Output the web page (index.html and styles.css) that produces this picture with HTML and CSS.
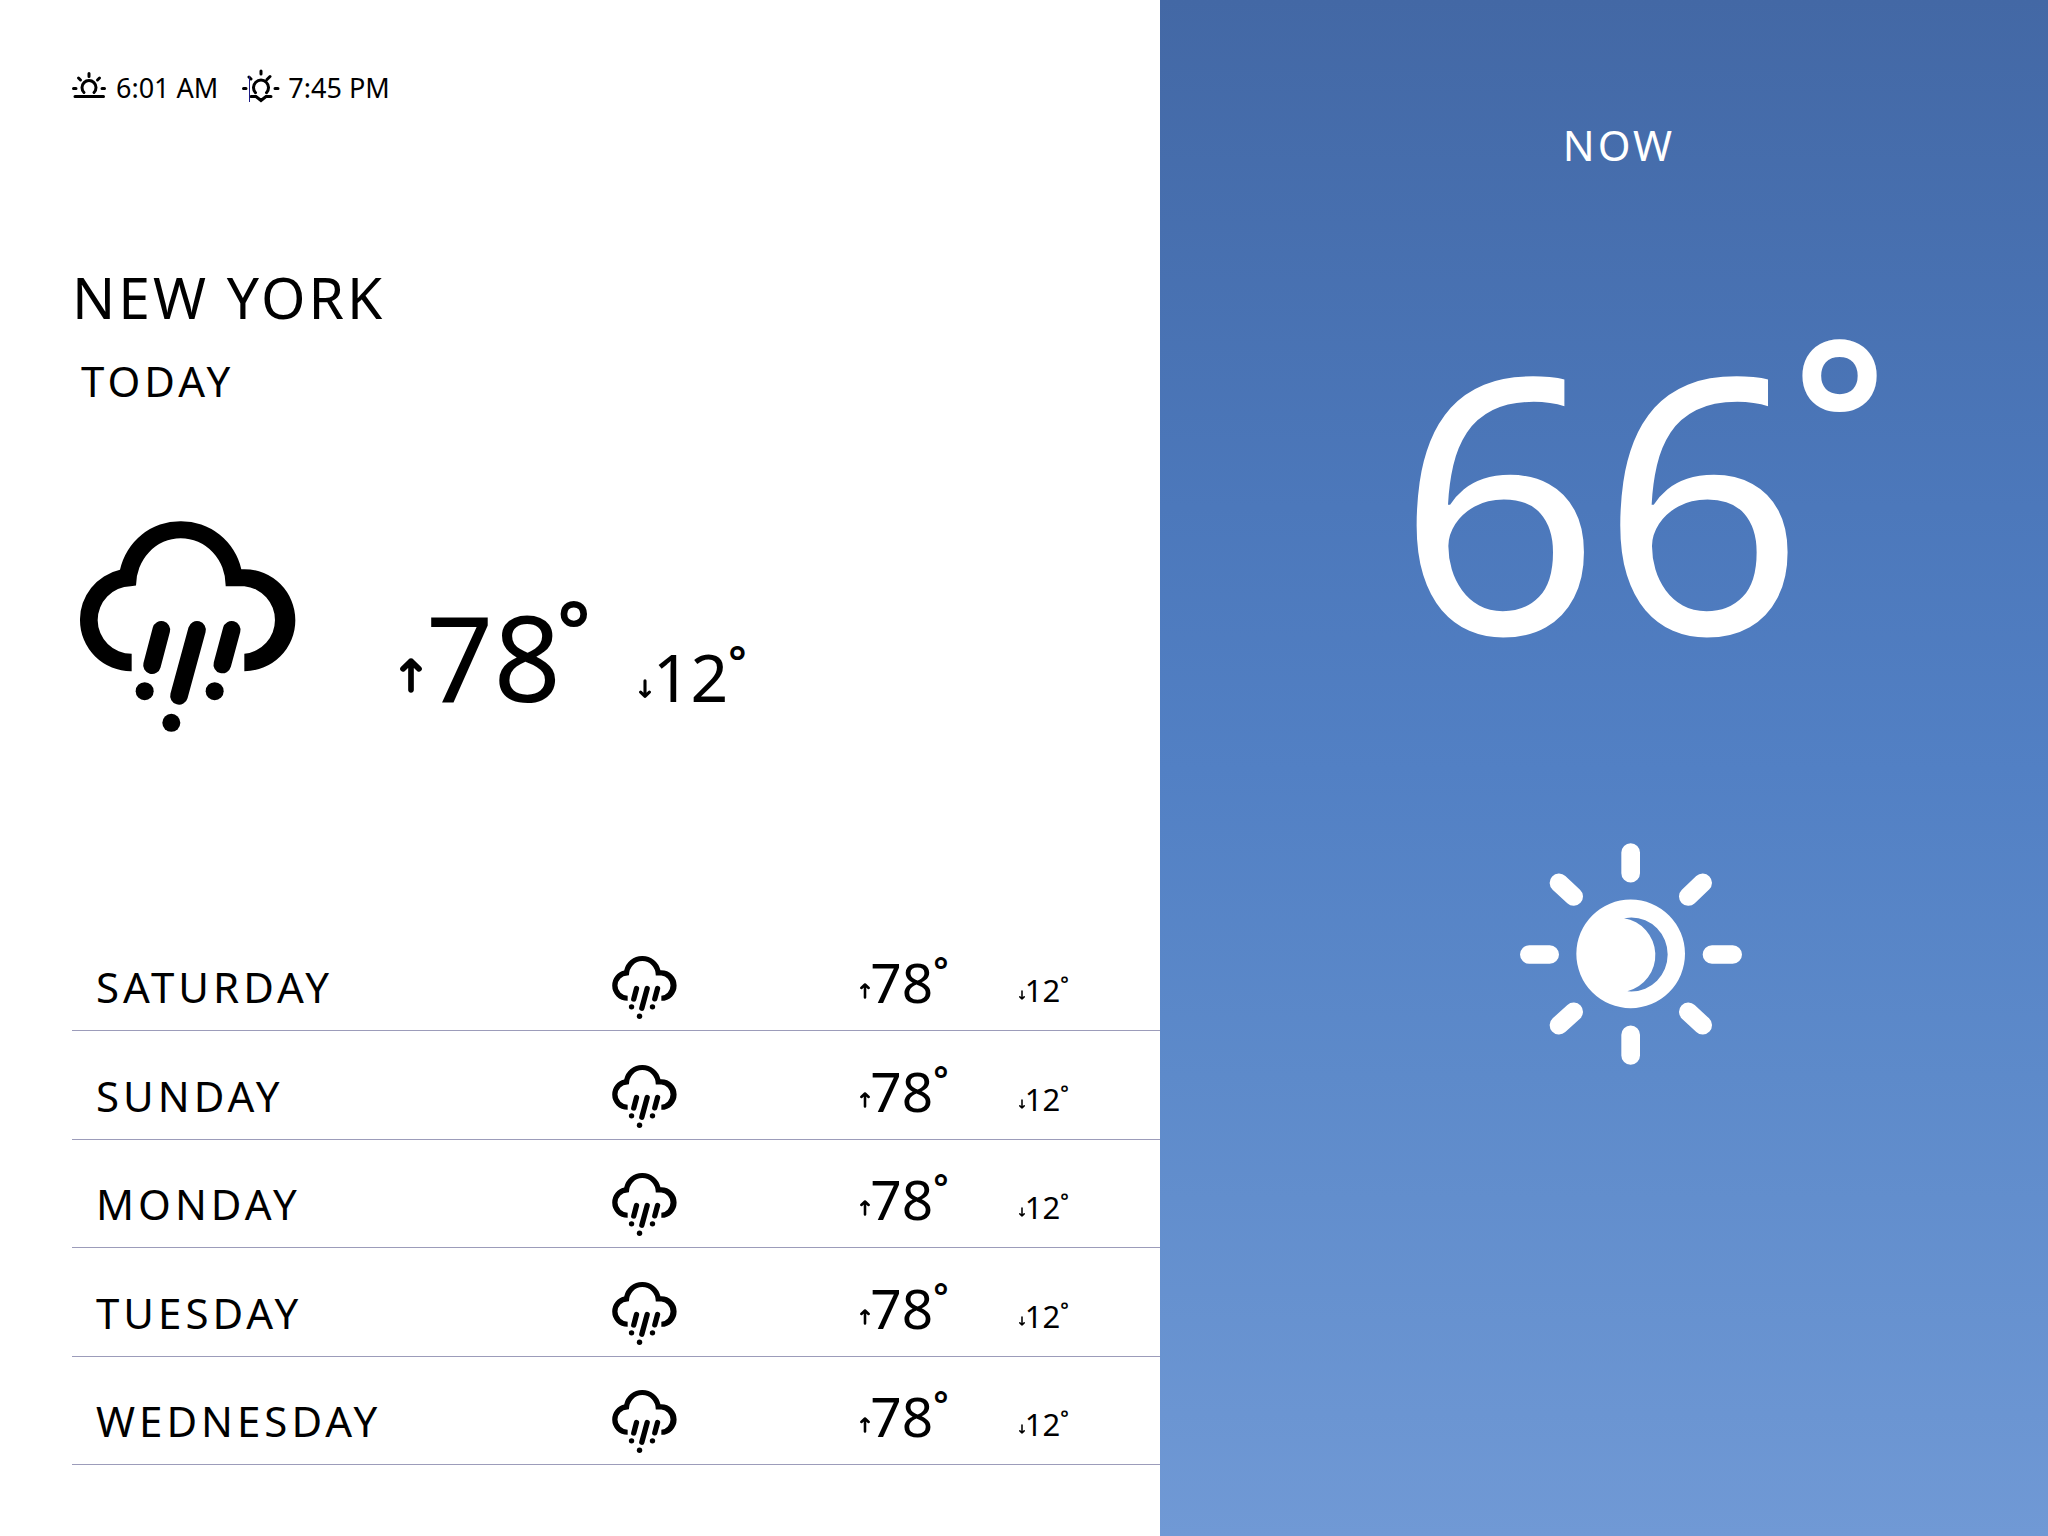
FILE: index.html
```html
<!DOCTYPE html>
<html lang="en">
<head>
<meta charset="utf-8">
<meta name="viewport" content="width=device-width, initial-scale=1">
<title>New York weather</title>
<link rel="stylesheet" href="styles.css">
</head>
<body>
<svg class="sprite" aria-hidden="true">
  <symbol id="rain" viewBox="60 63 648 632">
    <path d="M215 513A153 153 0 0 1 60 360A153 153 0 0 1 180 209A185 185 0 0 1 362 63A185 185 0 0 1 544 207H553A153 153 0 0 1 553 513V461A102 102 0 0 0 553 258H497A135 142 0 0 0 362 114A135 142 0 0 0 228 256L212 258A102 102 0 0 0 113 360A102 102 0 0 0 215 461Z"/>
    <path d="M304 389L276 495M411 389L357 587M515 389L487 493" stroke="currentColor" stroke-width="53" stroke-linecap="round"/>
    <circle cx="254" cy="573" r="27"/><circle cx="464" cy="573" r="27"/><circle cx="334" cy="668" r="27"/>
  </symbol>
  <symbol id="up" viewBox="0 0 66 104">
    <path d="M33 9V95M9 32L33 9L57 32" fill="none" stroke="currentColor" stroke-width="17" stroke-linecap="round" stroke-linejoin="round"/>
  </symbol>
  <symbol id="down" viewBox="0 0 66 104">
    <path d="M33 9V95M9 72L33 95L57 72" fill="none" stroke="currentColor" stroke-width="17" stroke-linecap="round" stroke-linejoin="round"/>
  </symbol>
</svg>
<main class="app">
  <section class="forecast">
    <div class="sun-times">
      <span class="sun-time">
        <svg class="sun-icon" viewBox="0 0 36 36" role="img" aria-label="Sunrise"><path d="M3 26.5H31.5M12 22.5A7 7 0 1 1 22 22.5M1.5 18.5H4M30 18.5H32.5M17 3.5V6.5M6.500 8L8.500 10M27.500 8L25.500 10"/></svg>
        <span>6:01 AM</span>
      </span>
      <span class="sun-time">
        <svg class="sun-icon sunset" viewBox="0 0 38 36" role="img" aria-label="Sunset"><path d="M9 26.500H14L19 30.500L24 26.500H29M13.500 22.700A7.500 7.500 0 1 1 24.500 22.700M1.500 18.500H4M33 18.500H36M19 1V4M7 7L9 9M28 6.500L25 9.500"/><path class="cursor" d="M7.500 6V32"/></svg>
        <span>7:45 PM</span>
      </span>
    </div>
    <h1 class="city">NEW YORK</h1>
    <h2 class="day-label">TODAY</h2>
    <div class="today">
      <svg class="today-icon" role="img" aria-label="Rain"><use href="#rain"/></svg>
      <div class="today-temps">
        <span class="temp temp-xl"><svg class="arrow" aria-label="High"><use href="#up"/></svg>78<span class="deg">°</span></span>
        <span class="temp temp-lg"><svg class="arrow" aria-label="Low"><use href="#down"/></svg>12<span class="deg">°</span></span>
      </div>
    </div>
    <table class="week">
      <colgroup><col class="c-day"><col class="c-icon"><col class="c-high"><col class="c-low"></colgroup>
      <tbody>
        <tr><th scope="row">SATURDAY</th><td class="icon"><svg class="row-icon" role="img" aria-label="Rain"><use href="#rain"/></svg></td><td class="high"><span class="temp temp-md"><svg class="arrow" aria-label="High"><use href="#up"/></svg>78<span class="deg">°</span></span></td><td class="low"><span class="temp temp-sm"><svg class="arrow" aria-label="Low"><use href="#down"/></svg>12<span class="deg">°</span></span></td></tr>
        <tr><th scope="row">SUNDAY</th><td class="icon"><svg class="row-icon" role="img" aria-label="Rain"><use href="#rain"/></svg></td><td class="high"><span class="temp temp-md"><svg class="arrow" aria-label="High"><use href="#up"/></svg>78<span class="deg">°</span></span></td><td class="low"><span class="temp temp-sm"><svg class="arrow" aria-label="Low"><use href="#down"/></svg>12<span class="deg">°</span></span></td></tr>
        <tr><th scope="row">MONDAY</th><td class="icon"><svg class="row-icon" role="img" aria-label="Rain"><use href="#rain"/></svg></td><td class="high"><span class="temp temp-md"><svg class="arrow" aria-label="High"><use href="#up"/></svg>78<span class="deg">°</span></span></td><td class="low"><span class="temp temp-sm"><svg class="arrow" aria-label="Low"><use href="#down"/></svg>12<span class="deg">°</span></span></td></tr>
        <tr><th scope="row">TUESDAY</th><td class="icon"><svg class="row-icon" role="img" aria-label="Rain"><use href="#rain"/></svg></td><td class="high"><span class="temp temp-md"><svg class="arrow" aria-label="High"><use href="#up"/></svg>78<span class="deg">°</span></span></td><td class="low"><span class="temp temp-sm"><svg class="arrow" aria-label="Low"><use href="#down"/></svg>12<span class="deg">°</span></span></td></tr>
        <tr><th scope="row">WEDNESDAY</th><td class="icon"><svg class="row-icon" role="img" aria-label="Rain"><use href="#rain"/></svg></td><td class="high"><span class="temp temp-md"><svg class="arrow" aria-label="High"><use href="#up"/></svg>78<span class="deg">°</span></span></td><td class="low"><span class="temp temp-sm"><svg class="arrow" aria-label="Low"><use href="#down"/></svg>12<span class="deg">°</span></span></td></tr>
      </tbody>
    </table>
  </section>
  <section class="now">
    <h2 class="now-label">NOW</h2>
    <p class="now-temp">66<span class="deg">°</span></p>
    <svg class="now-icon" viewBox="60 71 666 665" role="img" aria-label="Sunny">
      <path fill-rule="evenodd" d="M229 403A163 163 0 0 1 555 403A163 163 0 0 1 229 403ZM372 296L394 294A109 111 0 0 1 394 516L382 515A112 112 0 0 0 372 296Z"/>
      <path stroke="currentColor" stroke-width="56" stroke-linecap="round" d="M392 99V161M392 646V708M88 405H149M636 405H698M177 190L221 231M608 190L565 231M221 577L177 617M565 577L608 617"/>
    </svg>
  </section>
</main>
</body>
</html>
```

FILE: styles.css
```css
* { box-sizing: border-box; }

body {
  margin: 0;
  background: #fff;
  color: #000;
  font-family: "Noto Sans", "Open Sans", sans-serif;
}

svg { fill: currentColor; flex: none; }
.sprite { position: absolute; width: 0; height: 0; }

h1, h2, p { margin: 0; font-weight: 400; }

.app {
  display: grid;
  grid-template-columns: 145fr 111fr;
  min-height: 100vh;
}

.forecast { padding: 68px 0 64px 72px; }

/* Sunrise and sunset */
.sun-times { display: flex; gap: 24px; }
.sun-time {
  display: flex;
  align-items: center;
  gap: 8px;
  font-size: 27px;
  line-height: 40px;
}
.sun-icon {
  width: 36px;
  height: 36px;
  overflow: visible;
  fill: none;
  stroke: currentColor;
  stroke-width: 3;
  stroke-linecap: round;
}
.sunset { width: 38px; }
.cursor { stroke: #1c1c84; stroke-width: 1; stroke-linecap: butt; }

.city {
  margin-top: 157px;
  font-size: 57px;
  line-height: 64px;
  letter-spacing: 3px;
}
.day-label {
  margin-top: 28px;
  padding-left: 9px;
  font-size: 42px;
  line-height: 48px;
  letter-spacing: 4px;
}

/* Temperatures: arrow, number, raised degree ring */
.temp { display: inline-block; white-space: nowrap; line-height: 1; }
.deg { line-height: 0; font-weight: 600; }

.today {
  display: flex;
  align-items: flex-end;
  gap: 104px;
  margin: 116px 0 0 8px;
}
.today-icon { width: 216px; height: 211px; }
.today-temps {
  display: flex;
  align-items: baseline;
  gap: 48px;
  padding-bottom: 16px;
}

.temp-xl { font-size: 118px; }
.temp-xl .arrow { width: 22px; height: 35px; margin-right: 4px; vertical-align: 9px; }
.temp-xl .deg { margin-left: -4px; font-size: 79px; vertical-align: 43px; }

.temp-lg { font-size: 66px; }
.temp-lg .arrow { width: 12px; height: 19px; margin-right: 2px; vertical-align: 4px; }
.temp-lg .deg { font-size: 43px; vertical-align: 25px; }

.temp-md { font-size: 55px; }
.temp-md .arrow { width: 10px; height: 16px; vertical-align: 4px; }
.temp-md .deg { font-size: 36px; vertical-align: 20px; }

.temp-sm { font-size: 31px; }
.temp-sm .arrow { width: 6px; height: 10px; vertical-align: 2px; }
.temp-sm .deg { font-size: 20px; vertical-align: 11px; }

/* Week */
.week {
  width: 100%;
  margin-top: 191px;
  table-layout: fixed;
  border-collapse: separate;
  border-spacing: 0;
}
.c-day { width: 49%; }
.c-icon { width: 23%; }
.c-high { width: 14%; }
.week tr { height: 108px; }
.week tr:nth-child(even) { height: 109px; }
.week th, .week td {
  padding: 0;
  border-bottom: 1px solid #9c9cba;
  text-align: left;
  vertical-align: bottom;
}
.week th {
  padding: 0 0 19px 24px;
  font-size: 42px;
  font-weight: 400;
  line-height: 48px;
  letter-spacing: 4px;
}
.week .icon { padding: 0 0 11px 7px; }
.row-icon { display: block; width: 65px; height: 63px; }
.week .high { padding: 0 0 21px 5px; }
.week .low { padding: 0 0 23px 11px; }

/* Current conditions */
.now {
  display: flex;
  flex-direction: column;
  align-items: center;
  padding: 121px 0 64px;
  background: linear-gradient(#4368a5, #4c78bb 33%, #5280c4 50%, #5d8aca 70%, #7099d5);
  color: #fff;
}
.now-label { padding-left: 30px; font-size: 42px; line-height: 48px; letter-spacing: 3px; }
.now-temp {
  margin-top: 147px;
  padding-left: 76px;
  font-size: 356px;
  line-height: 360px;
  white-space: nowrap;
}
.now-temp .deg { margin-left: -12px; font-size: 222px; vertical-align: 133px; }
.now-icon { width: 222px; height: 222px; margin: 167px 0 0 54px; }
```
